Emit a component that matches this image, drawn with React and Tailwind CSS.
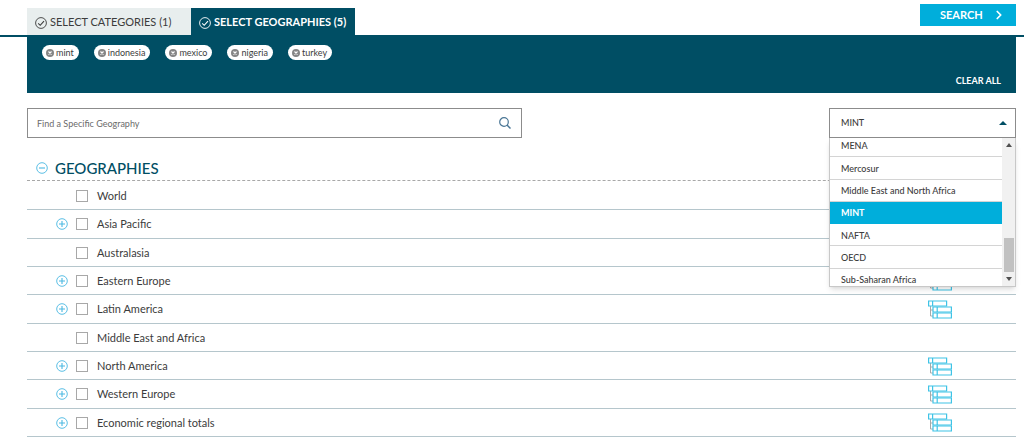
import { useState } from 'react';
import { ChevronRight } from 'lucide-react';

const tabs = [
    { id: 'categories', label: 'SELECT CATEGORIES (1)' },
    { id: 'geographies', label: 'SELECT GEOGRAPHIES (5)' },
];

const geographies = [
    { name: 'World' },
    { name: 'Asia Pacific', expandable: true },
    { name: 'Australasia' },
    { name: 'Eastern Europe', expandable: true },
    { name: 'Latin America', expandable: true },
    { name: 'Middle East and Africa' },
    { name: 'North America', expandable: true },
    { name: 'Western Europe', expandable: true },
    { name: 'Economic regional totals', expandable: true },
];

const groups = ['MENA', 'Mercosur', 'Middle East and North Africa', 'MINT', 'NAFTA', 'OECD', 'Sub-Saharan Africa'];

const CheckIcon = () => (
    <svg viewBox="0 0 12 12" className="w-3 h-3 shrink-0" fill="none" stroke="currentColor" aria-hidden="true">
        <circle cx="6" cy="6" r="5.4" strokeWidth="0.9" />
        <path d="M3.2 6.4l2 1.9 3.8-4.2" strokeWidth="1.1" />
    </svg>
);

const ToggleIcon = ({ open }) => (
    <svg viewBox="0 0 12 12" className="block w-3 h-3" fill="none" stroke="#4ab8e2" aria-hidden="true">
        <circle cx="6" cy="6" r="5.3" strokeWidth="0.9" />
        <path d={open ? 'M3 6h6' : 'M3 6h6M6 3v6'} strokeWidth="1.1" />
    </svg>
);

const SearchIcon = () => (
    <svg viewBox="0 0 12 12" className="w-3 h-3" fill="none" stroke="#4a7695" aria-hidden="true">
        <circle cx="5" cy="5" r="4.3" strokeWidth="1.2" />
        <path d="M8 8l3.5 3.5" strokeWidth="1.5" />
    </svg>
);

const RemoveIcon = () => (
    <svg viewBox="0 0 8 8" className="w-2 h-2" aria-hidden="true">
        <circle cx="4" cy="4" r="4" fill="#858585" />
        <path d="M2.5 2.5l3 3M5.5 2.5l-3 3" stroke="#fff" strokeWidth="1.1" />
    </svg>
);

const HierarchyIcon = () => (
    <svg viewBox="0 0 24 19" className="block w-6 h-[19px]" fill="none" aria-hidden="true">
        <path d="M2.5 6v10H5M2.5 10H5" stroke="#a9a9a9" />
        <g stroke="#3fc3e6" strokeWidth="1.2" fill="#fff">
            <path d="M.6 1h18v5H.6zM4.6 1v5" />
            <path d="M5 7h18.4v5H5zM9.2 7v5" />
            <path d="M5 13h18.4v5H5zM9.2 13v5" />
        </g>
    </svg>
);

const GroupSelect = () => {
    const [group, setGroup] = useState('MINT');
    const [open, setOpen] = useState(true);

    return (
        <div className="relative w-[187px] text-[9px] font-medium text-[#3c3c3c]">
            <select
                aria-label="Geography group"
                value={group}
                onChange={(e) => setGroup(e.target.value)}
                onClick={() => setOpen(!open)}
                className="block w-full h-[30px] pl-[11px] appearance-none border border-[#8c8c8c] bg-white"
            >
                {groups.map((name) => (
                    <option key={name}>{name}</option>
                ))}
            </select>
            <svg viewBox="0 0 8 4" className="absolute right-[9px] top-[13px] w-2 h-1 pointer-events-none" aria-hidden="true">
                <path d="M4 0l4 4H0z" fill="#004e64" />
            </svg>
            {open && (
                <div className="absolute z-10 top-full left-0 w-full h-[149px] flex border border-t-0 border-[#c8c8c8] bg-white shadow-md">
                    <div className="flex-1 flex flex-col justify-center pt-[2px] overflow-hidden">
                        <ul role="listbox" aria-label="Geography groups" className="shrink-0 grid auto-rows-fr min-h-[156px]">
                            {groups.map((name) => (
                                <li
                                    key={name}
                                    role="option"
                                    aria-selected={name === group}
                                    onClick={() => setGroup(name)}
                                    className={`flex items-center pt-px pl-[11px] border-b cursor-pointer ${
                                        name === group ? 'bg-[#00aedb] border-[#00aedb] text-white font-bold' : 'border-[#d4d4d4]'
                                    }`}
                                >
                                    {name}
                                </li>
                            ))}
                        </ul>
                    </div>
                    {/* scrollbar */}
                    <div className="w-[13px] flex flex-col items-center justify-between py-[5px] bg-[#f1f1f1]" aria-hidden="true">
                        <svg viewBox="0 0 6 4" className="w-[6px] h-1">
                            <path d="M3 0l3 4H0z" fill="#505050" />
                        </svg>
                        <div className="flex-1 w-[10px] flex flex-col justify-end pb-[5px]">
                            <div className="h-[34px] bg-[#c1c1c1]" />
                        </div>
                        <svg viewBox="0 0 6 4" className="w-[6px] h-1">
                            <path d="M3 4l3-4H0z" fill="#505050" />
                        </svg>
                    </div>
                </div>
            )}
        </div>
    );
};

const App = () => {
    const [activeTab, setActiveTab] = useState('geographies');
    const [selected, setSelected] = useState(['mint', 'indonesia', 'mexico', 'nigeria', 'turkey']);
    const [expanded, setExpanded] = useState(true);

    return (
        <div className="bg-white font-['Lato','Open_Sans',sans-serif] text-[#3c3c3c]">
            <header className="flex items-start justify-between pt-1 pl-[27px] pr-2 border-b-2 border-[#004e64]">
                <nav className="flex pt-1">
                    {tabs.map((tab) => (
                        <button
                            key={tab.id}
                            onClick={() => setActiveTab(tab.id)}
                            className={`w-[164px] h-[27px] flex items-center gap-[3px] pt-[2px] pl-2 text-[11px] whitespace-nowrap ${
                                tab.id === activeTab ? 'bg-[#004e64] text-white font-bold' : 'bg-[#e8eeee]'
                            }`}
                        >
                            <CheckIcon />
                            {tab.label}
                        </button>
                    ))}
                </nav>
                <button className="w-24 h-[22px] flex items-center justify-between pl-5 pr-[10px] bg-[#00aedb] text-white text-[11px] font-bold">
                    SEARCH
                    <ChevronRight className="w-[14px] h-[14px]" strokeWidth={3} />
                </button>
            </header>

            <main className="pl-[27px] pr-2">
                <section className="flex flex-col justify-between min-h-[56px] pt-2 pb-[6px] pl-[15px] pr-[15px] bg-[#004e64]">
                    <ul className="flex flex-wrap gap-[15px]">
                        {selected.map((name) => (
                            <li key={name}>
                                <button
                                    aria-label={`Remove ${name}`}
                                    onClick={() => setSelected(selected.filter((s) => s !== name))}
                                    className="h-[15px] flex items-center gap-[2px] pl-1 pr-[5px] rounded-full bg-white text-[9px]"
                                >
                                    <RemoveIcon />
                                    {name}
                                </button>
                            </li>
                        ))}
                    </ul>
                    <button onClick={() => setSelected([])} className="self-end text-[9px] leading-3 font-bold text-white">
                        CLEAR ALL
                    </button>
                </section>

                <div className="flex justify-between pt-[15px]">
                    <div className="w-1/2 h-[30px] flex items-center pl-[9px] pr-[10px] border border-[#8c8c8c]">
                        <input
                            type="text"
                            aria-label="Find a Specific Geography"
                            placeholder="Find a Specific Geography"
                            className="flex-1 pt-[2px] text-[9px] outline-none placeholder:text-[#6b6b6b]"
                        />
                        <SearchIcon />
                    </div>
                    <GroupSelect />
                </div>

                <div className="flex items-center gap-[7px] pt-5 pl-[9px] pb-[2px] border-b border-dashed border-[#a8a8a8]">
                    <button aria-label="Toggle geographies" onClick={() => setExpanded(!expanded)}>
                        <ToggleIcon open={expanded} />
                    </button>
                    <h2 className="text-[15px] leading-5 font-medium text-[#004e64]">GEOGRAPHIES</h2>
                </div>

                {expanded && (
                    <ul className="grid auto-rows-fr min-h-[256px] pt-px">
                        {geographies.map((geo) => (
                            <li key={geo.name} className="flex items-center pt-px pl-[29px] pr-[64px] border-b border-[#b5c6cc]">
                                <div className="w-5 flex">
                                    {geo.expandable && (
                                        <button aria-label={`Expand ${geo.name}`}>
                                            <ToggleIcon />
                                        </button>
                                    )}
                                </div>
                                <label className="flex-1 flex items-center gap-[9px] text-[11px]">
                                    <input type="checkbox" className="w-3 h-3 appearance-none border border-[#a8a8a8] checked:bg-[#00aedb]" />
                                    {geo.name}
                                </label>
                                {geo.expandable && (
                                    <button aria-label={`Show ${geo.name} hierarchy`}>
                                        <HierarchyIcon />
                                    </button>
                                )}
                            </li>
                        ))}
                    </ul>
                )}
            </main>
        </div>
    );
};

export default App;
